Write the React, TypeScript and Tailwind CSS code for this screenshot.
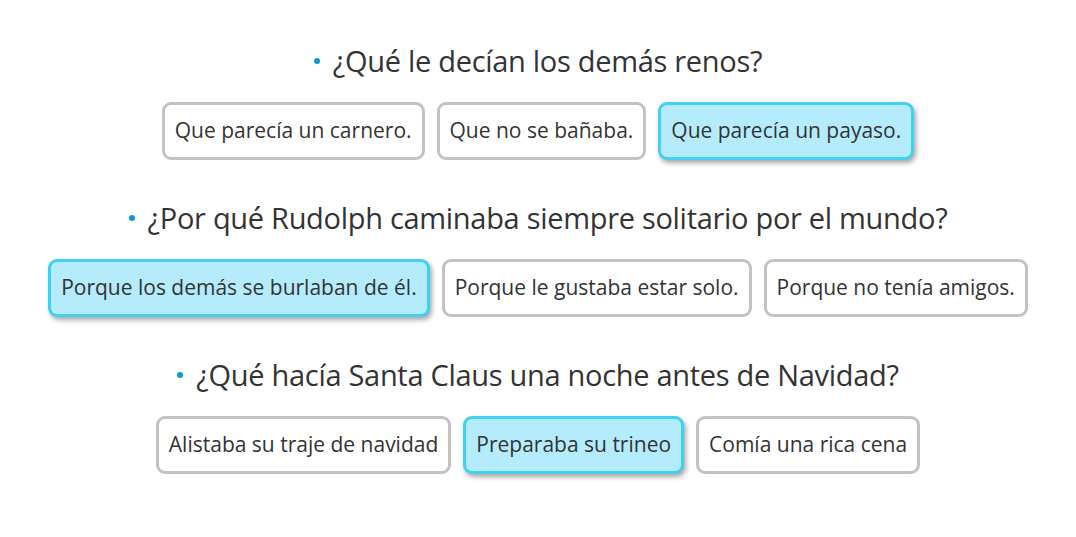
const questions = [
  {
    q: "¿Qué le decían los demás renos?",
    options: ["Que parecía un carnero.", "Que no se bañaba.", "Que parecía un payaso."],
    selected: 2,
  },
  {
    q: "¿Por qué Rudolph caminaba siempre solitario por el mundo?",
    options: ["Porque los demás se burlaban de él.", "Porque le gustaba estar solo.", "Porque no tenía amigos."],
    selected: 0,
  },
  {
    q: "¿Qué hacía Santa Claus una noche antes de Navidad?",
    options: ["Alistaba su traje de navidad", "Preparaba su trineo", "Comía una rica cena"],
    selected: 1,
  },
];

const App = () => {
  return (
    <div
      className="min-h-[537px] bg-white pt-[41px] text-[#333]"
      style={{ fontFamily: '"Open Sans", "Noto Sans", sans-serif' }}
    >
      <div className="flex flex-col items-center gap-[38px]">
        {questions.map((item) => (
          <div key={item.q} className="flex flex-col items-center gap-[21px]">
            <div className="flex items-center gap-[13px]">
              <span className="h-[6px] w-[6px] rounded-full bg-[#0b98db]" />
              <h2 className="text-[29px] leading-[40px] tracking-[-0.3px]">{item.q}</h2>
            </div>
            <div className="flex gap-[12px]">
              {item.options.map((opt, i) => (
                <button
                  key={opt}
                  className={
                    i === item.selected
                      ? "h-[58px] rounded-[9px] border-[3px] border-[#40d0f0] bg-[#b4ecfd] px-[10px] text-[21px] shadow-[2px_3px_5px_rgba(0,0,0,0.35)]"
                      : "h-[58px] rounded-[9px] border-[3px] border-[#c2c2c2] bg-white px-[10px] text-[21px]"
                  }
                >
                  {opt}
                </button>
              ))}
            </div>
          </div>
        ))}
      </div>
    </div>
  );
};

export default App;
